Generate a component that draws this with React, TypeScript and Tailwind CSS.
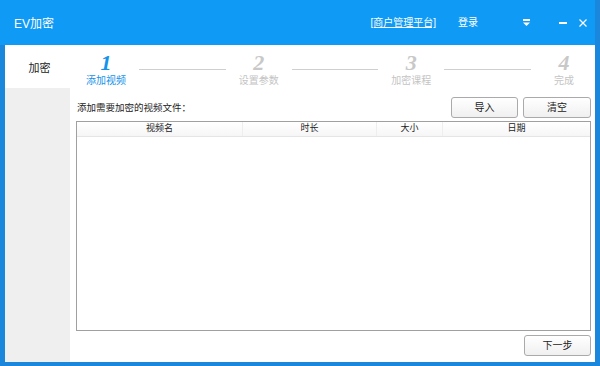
import React from "react";

const font = { fontFamily: '"Liberation Sans", "Noto Sans CJK SC", sans-serif' };

function Step({ n, label, active }: { n: string; label: string; active?: boolean }) {
  return (
    <div className="flex flex-col items-center w-[40px]">
      <div
        className={`text-[22px] leading-[22px] font-bold italic ${active ? "text-[#1592ea]" : "text-[#c8c8c8]"}`}
        style={{ fontFamily: '"Liberation Serif", serif' }}
      >
        {n}
      </div>
      <div className={`text-[10px] leading-[13px] whitespace-nowrap ${active ? "text-[#1592ea]" : "text-[#c4c4c4]"}`}>{label}</div>
    </div>
  );
}

function Line() {
  return <div className="h-px bg-[#cfcfcf] flex-1 mt-[17px] mx-[13px] self-start" />;
}

const btn =
  "h-[21px] border border-[#aaa] rounded-[3px] bg-gradient-to-b from-white to-[#f0f0f0] text-[10px] text-[#222]";

export default function App() {
  return (
    <div className="w-[600px] h-[366px] bg-[#1a86dc] overflow-hidden" style={font}>
      <div className="ml-[5px] w-[590px] h-[362px] flex flex-col bg-white">
        <div className="h-[45px] bg-[#0f9af5] -ml-[5px] w-[595px] flex items-center text-white">
          <div className="pl-[14px] text-[12px] mt-[2px]">EV加密</div>
          <div className="flex-1" />
          <div className="text-[10px] underline">[商户管理平台]</div>
          <div className="text-[10px] ml-[22px] w-[20px]">登录</div>
          <svg className="ml-[45px]" width="7" height="7" viewBox="0 0 7 7">
            <rect x="0" y="0" width="7" height="2" fill="white" />
            <polygon points="0,3.5 7,3.5 3.5,7" fill="white" />
          </svg>
          <div className="ml-[29px] w-[8px] h-[2px] bg-white" />
          <svg className="ml-[12px] mr-[8px]" width="8" height="8" viewBox="0 0 8 8">
            <path d="M0.5 0.5 L7.5 7.5 M7.5 0.5 L0.5 7.5" stroke="white" strokeWidth="1.2" />
          </svg>
        </div>
        <div className="flex flex-1">
          <div className="w-[65px] flex flex-col">
            <div className="h-[43px] flex items-center justify-center text-[11px] text-[#222] pt-[3px] pl-[4px]">加密</div>
            <div className="flex-1 bg-[#efefef]" />
          </div>
          <div className="flex-1 flex flex-col pl-[6px] pr-[4px]">
            <div className="flex items-start h-[48px] pt-[7px] pl-[10px] pr-[7px]">
              <Step n="1" label="添加视频" active />
              <Line />
              <Step n="2" label="设置参数" />
              <Line />
              <Step n="3" label="加密课程" />
              <Line />
              <Step n="4" label="完成" />
            </div>
            <div className="flex items-end h-[25px]">
              <div className="text-[9.5px] text-[#222] pl-[1px] pb-[3px] flex-1">添加需要加密的视频文件：</div>
              <button className={`${btn} w-[67px]`}>导入</button>
              <button className={`${btn} ml-[5px] w-[68px]`}>清空</button>
            </div>
            <div className="mt-[3px] h-[210px] border border-[#a0a0a0] flex flex-col">
              <div className="h-[15px] flex text-[9px] text-[#222] border-b border-[#e5e5e5] bg-gradient-to-b from-white to-[#f6f6f6]">
                <div className="w-[166px] flex items-center justify-center border-r border-[#eee]">视频名</div>
                <div className="w-[134px] flex items-center justify-center border-r border-[#eee]">时长</div>
                <div className="w-[66px] flex items-center justify-center border-r border-[#eee]">大小</div>
                <div className="flex-1 flex items-center justify-center">日期</div>
              </div>
            </div>
            <div className="flex justify-end mt-[4px]">
              <button className={`${btn} w-[67px]`}>下一步</button>
            </div>
          </div>
        </div>
      </div>
    </div>
  );
}
